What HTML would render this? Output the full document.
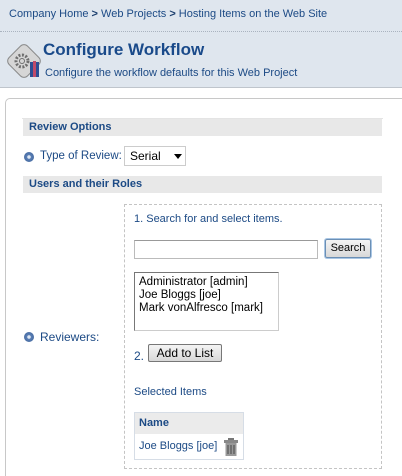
<!DOCTYPE html>
<html style="width:402px;height:476px;overflow:hidden"><head><style>
*{margin:0;padding:0;box-sizing:border-box}
body{width:402px;height:476px;overflow:hidden;background:#fff;font-family:"Liberation Sans",sans-serif;font-size:11px;color:#1c4a85;position:relative}
.a{position:absolute}
.hdr{left:0;top:0;width:402px;height:88px;background:#dfe6ee;border-bottom:1px solid #bfc5cc}
.bar{left:23px;width:359px;height:17px;background:#e8e8e8;font-weight:bold;color:#1c4a85;font-size:11px;line-height:17px;padding-left:6px}
.btn{background:linear-gradient(#f4f4f4,#d8d8d8);border:1px solid #777;border-radius:2px;color:#000;font-size:11px;text-align:center}
.dot{width:10px;height:10px;border-radius:50%;background:radial-gradient(circle,#dfe8f4 20%,#5a7fb5 30%,#3b5f96 100%)}
</style></head><body>
<div class="a hdr"></div>
<div class="a" style="left:9px;top:8px;font-size:11px;color:#1c4a85">Company Home <b style="color:#1c3f6e">&gt;</b> Web Projects <b style="color:#1c3f6e">&gt;</b> Hosting Items on the Web Site</div>
<div class="a" style="left:0;top:31px;width:402px;border-top:1px dotted #aab3bf"></div>
<svg class="a" style="left:5px;top:42px" width="40" height="38" viewBox="0 0 40 38">
<rect x="6" y="6" width="26" height="26" rx="5" transform="rotate(45 19 19)" fill="#d6d6d6" stroke="#8a8a8a"/>
<circle cx="17" cy="19" r="6" fill="none" stroke="#6f6f6f" stroke-width="3" stroke-dasharray="2 1.5"/>
<circle cx="17" cy="19" r="2.5" fill="#d6d6d6" stroke="#6f6f6f"/>
<rect x="25" y="20" width="9" height="15" fill="#2c4e95"/><rect x="28" y="19" width="3" height="16" fill="#c04a6a"/>
</svg>
<div class="a" style="left:43px;top:40px;font-size:17px;font-weight:bold;color:#1a4a8a">Configure Workflow</div>
<div class="a" style="left:45px;top:67px;font-size:11px;color:#1c4a85">Configure the workflow defaults for this Web Project</div>
<div class="a" style="left:5px;top:98px;width:420px;height:385px;border:1px solid #c8c8c8;border-radius:5px"></div>
<div class="a" style="left:22px;top:118px;width:361px;border-top:1px solid #e4e4e4"></div>
<div class="a bar" style="top:119px">Review Options</div>
<div class="a dot" style="left:24px;top:152px"></div>
<div class="a" style="left:40px;top:150px;font-size:11.5px;color:#1c4a85">Type of Review:</div>
<div class="a" style="left:124px;top:146px;width:62px;height:20px;border:1px solid #ccc;background:#fff;color:#000;font-size:12px;line-height:18px;padding-left:5px">Serial<span class="a" style="left:49px;top:7px;border-left:4px solid transparent;border-right:4px solid transparent;border-top:5px solid #000"></span></div>
<div class="a bar" style="top:176px">Users and their Roles</div>
<div class="a" style="left:124px;top:204px;width:258px;height:265px;border:1px dashed #c4c4c4"></div>
<div class="a" style="left:134px;top:213px;font-size:11px">1. Search for and select items.</div>
<div class="a" style="left:134px;top:240px;width:184px;height:19px;border:1px solid #bbb;border-top-color:#999"></div>
<div class="a btn" style="left:325px;top:239px;width:46px;height:19px;line-height:17px;border-color:#6b8fb5;box-shadow:0 0 0 1px #a9c6e4">Search</div>
<div class="a" style="left:134px;top:272px;width:145px;height:59px;border:1px solid #ccc;border-top-color:#777;border-left-color:#777;color:#000;font-size:11.5px;line-height:13px;padding:3px 4px">Administrator [admin]<br>Joe Bloggs [joe]<br>Mark vonAlfresco [mark]</div>
<div class="a dot" style="left:24px;top:332px"></div>
<div class="a" style="left:40px;top:330px;font-size:12px">Reviewers:</div>
<div class="a" style="left:134px;top:349px;font-size:12px">2.</div>
<div class="a btn" style="left:148px;top:344px;width:74px;height:18px;line-height:16px;font-size:12px">Add to List</div>
<div class="a" style="left:134px;top:386px;font-size:11px">Selected Items</div>
<div class="a" style="left:134px;top:412px;width:110px;height:48px;border:1px solid #d6dde6"></div>
<div class="a" style="left:135px;top:413px;width:108px;height:21px;background:#ebebeb;font-weight:bold;font-size:11px;line-height:21px;padding-left:4px">Name</div>
<div class="a" style="left:139px;top:440px;font-size:11px">Joe Bloggs [joe]</div>
<svg class="a" style="left:224px;top:438px" width="14" height="18" viewBox="0 0 14 18"><rect x="4" y="0" width="6" height="2" fill="#777"/><rect x="0" y="2" width="14" height="3" fill="#888"/><rect x="1.5" y="5" width="11" height="13" fill="#999"/><path d="M4 7v9M7 7v9M10 7v9" stroke="#555" stroke-width="1.2"/></svg>
</body></html>
